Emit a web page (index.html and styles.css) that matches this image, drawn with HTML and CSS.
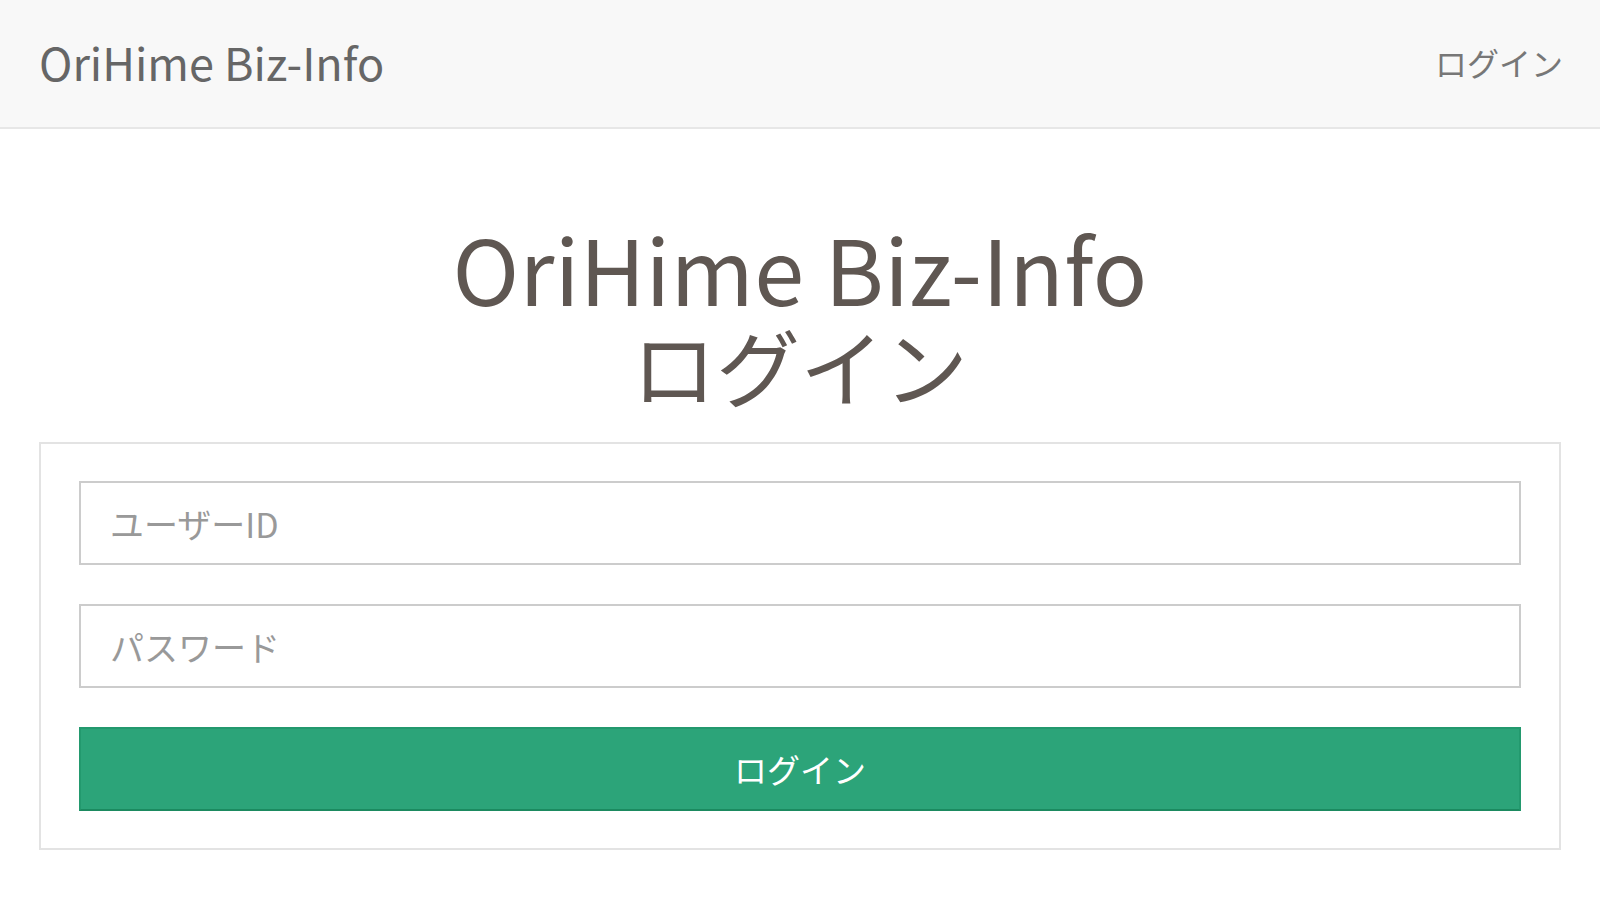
FILE: index.html
```html
<!DOCTYPE html>
<html lang="ja">
<head>
  <meta charset="UTF-8">
  <meta name="viewport" content="width=device-width, initial-scale=1.0">
  <title>OriHime Biz-Info ログイン</title>
  <link rel="stylesheet" href="styles.css">
</head>
<body>
  <!-- Header -->
  <header class="navbar">
    <a href="#" class="brand">OriHime Biz-Info</a>
    <nav class="nav">
      <a href="#">ログイン</a>
    </nav>
  </header>

  <!-- Login -->
  <main class="container">
    <h1 class="title">
      <span class="title-name">OriHime Biz-Info</span>
      <span class="title-sub">ログイン</span>
    </h1>
    <form class="login-box">
      <input type="text" class="form-input" placeholder="ユーザーID">
      <input type="password" class="form-input" placeholder="パスワード">
      <button type="button" class="btn btn-login">ログイン</button>
    </form>
  </main>
</body>
</html>
```

FILE: styles.css
```css
/* Reset and base styles */
* {
  margin: 0;
  padding: 0;
  box-sizing: border-box;
}

body {
  font-family: "Noto Sans CJK JP", "Noto Sans", sans-serif;
  color: #333;
  background-color: #fff;
  min-height: 100vh;
}

/* Header */
.navbar {
  display: flex;
  align-items: center;
  justify-content: space-between;
  height: 129px;
  padding: 0 37px 4px 39px;
  background-color: #f8f8f8;
  border-bottom: 2px solid #e7e7e7;
}

.brand {
  font-size: 45px;
  color: #666;
  text-decoration: none;
}

.nav a {
  font-size: 32px;
  color: #777;
  text-decoration: none;
}

/* Main */
.container {
  padding: 0 39px;
}

.title {
  display: flex;
  flex-direction: column;
  align-items: center;
  margin: 89px 0 29px;
  font-weight: 400;
  line-height: 1.1;
  color: #5f5752;
}

.title-name {
  font-size: 90px;
  letter-spacing: 0.3px;
}

.title-sub {
  font-size: 84px;
  line-height: 96px;
}

.login-box {
  display: flex;
  flex-direction: column;
  gap: 39px;
  padding: 37px 38px;
  border: 2px solid #e3e3e3;
}

.form-input {
  height: 84px;
  padding: 0 29px;
  border: 2px solid #ccc;
  font-family: inherit;
  font-size: 34px;
  color: #555;
  outline: none;
}

.form-input::placeholder {
  color: #999;
}

.btn {
  height: 84px;
  border: none;
  font-family: inherit;
  font-size: 33px;
  cursor: pointer;
}

.btn-login {
  background-color: #2ca479;
  border: 2px solid #23996e;
  border-bottom-color: #1b8a60;
  color: #fff;
}
```
